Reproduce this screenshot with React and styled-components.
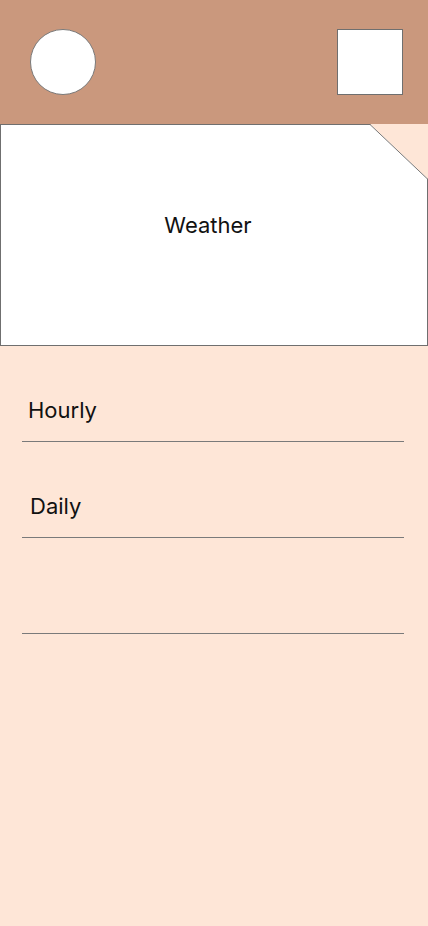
import styled, { createGlobalStyle } from "styled-components";

const GlobalStyle = createGlobalStyle`
    body{
        margin: 0;
        background-color: #fee6d7;
        font-family: Inter, "Noto Sans", sans-serif;
    }
`;

export default function App(){

    return(
        <Page>
            <GlobalStyle />
            <Header>
                <Avatar />
                <MenuBox />
            </Header>

            <WeatherCard>
                <p>Weather</p>
                <Corner>
                    <svg width="58" height="55" viewBox="0 0 58 55">
                        <polygon points="0,0 58,0 58,55" fill="#fee6d7" />
                        <line x1="0" y1="0.5" x2="57.5" y2="55" stroke="#777" strokeWidth="1" />
                    </svg>
                </Corner>
            </WeatherCard>

            <List>
                <Row indent={28}>Hourly</Row>
                <Row indent={30}>Daily</Row>
                <Row indent={30}></Row>
            </List>
        </Page>
    );
}

const Page = styled.div`
    width: 428px;
    min-height: 926px;
    background-color: #fee6d7;
    color: #111;
`;

const Header = styled.div`
    height: 124px;
    box-sizing: border-box;
    padding: 29px 25px 0 30px;
    background-color: #ca987d;
    display: flex;
    justify-content: space-between;
    align-items: flex-start;
`;

const Avatar = styled.div`
    width: 66px;
    height: 66px;
    box-sizing: border-box;
    border-radius: 50%;
    border: 1px solid #7a7a7a;
    background-color: #ffffff;
`;

const MenuBox = styled.div`
    width: 66px;
    height: 66px;
    box-sizing: border-box;
    border: 1px solid #6f6f6f;
    background-color: #ffffff;
`;

const WeatherCard = styled.div`
    position: relative;
    height: 222px;
    box-sizing: border-box;
    padding: 0 12px 20px 0;
    border: 1px solid #6f6f6f;
    background-color: #ffffff;
    display: flex;
    justify-content: center;
    align-items: center;

    p{
        margin: 0;
        font-size: 22px;
        line-height: 26px;
    }
`;

const Corner = styled.div`
    position: absolute;
    top: -1px;
    right: -1px;
    width: 58px;
    height: 55px;

    svg{
        display: block;
    }
`;

const List = styled.div`
    display: flex;
    flex-direction: column;
    padding: 0 24px 0 22px;
`;

const Row = styled.div`
    height: 77px;
    padding: 0 0 18px ${(props) => props.indent - 22}px;
    border-bottom: 1px solid #7a7a7a;
    display: flex;
    align-items: flex-end;
    font-size: 22px;
    line-height: 26px;
`;
